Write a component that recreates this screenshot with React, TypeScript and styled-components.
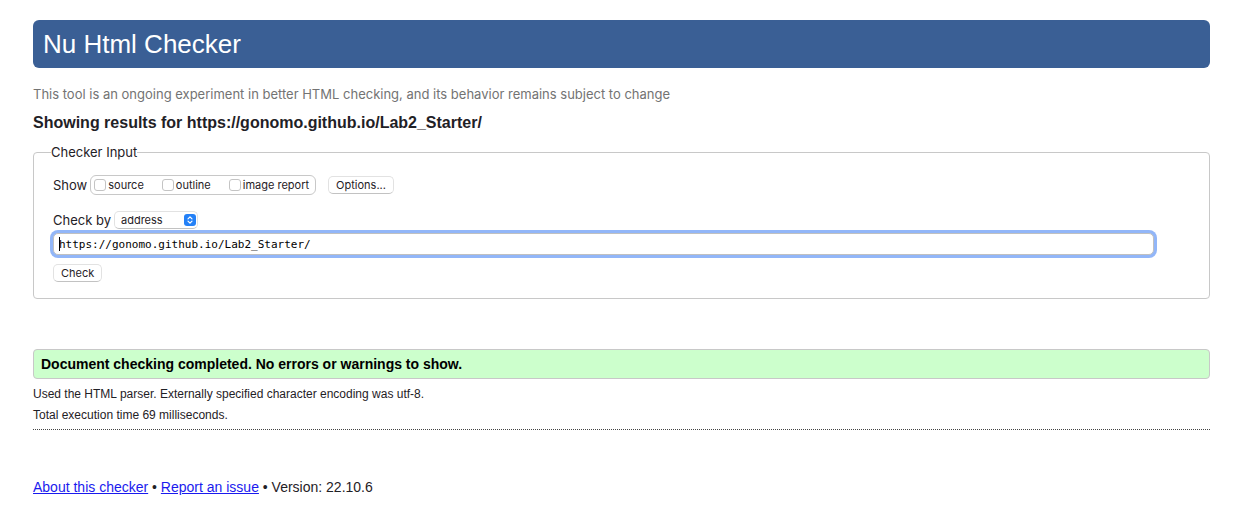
import React, { useState } from "react";
import styled, { createGlobalStyle } from "styled-components";

const sans = '"Liberation Sans", Arial, sans-serif';
const system = 'Inter, system-ui, sans-serif';

const GlobalStyle = createGlobalStyle`
  *, *::before, *::after { box-sizing: border-box; }
  body { margin: 0; background: #fff; color: #1f2126; font-family: ${sans}; }
`;

const Page = styled.div`
  padding: 20px 36px 0 33px;
`;

const Banner = styled.h1`
  margin: 0;
  padding: 0 10px;
  border-radius: 6px;
  background: #3a5f95;
  color: #fff;
  font-size: 26px;
  font-weight: 400;
  line-height: 48px;
`;

const Notice = styled.p`
  margin: 16px 0 0;
  color: #737373;
  font-family: ${system};
  font-size: 13px;
  line-height: 20px;
`;

const ResultsHeading = styled.h2`
  margin: 9px 0 0;
  font-size: 16px;
  line-height: 20px;
`;

const CheckerForm = styled.form`
  margin-top: 9px;
`;

const Fieldset = styled.fieldset`
  margin: 0;
  padding: 13px 55px 15px 19px;
  border: 1px solid #c8c8c8;
  border-radius: 4px;
  min-width: 0;
  font-family: ${system};
  font-size: 13px;
`;

const Legend = styled.legend`
  margin-left: -2px;
  padding: 0;
  line-height: 20px;
`;

const Row = styled.div<{ $top?: number }>`
  display: flex;
  align-items: center;
  height: 20px;
  margin-top: ${(p) => p.$top ?? 0}px;
`;

const ShowGroup = styled.div`
  display: flex;
  align-items: center;
  gap: 18px;
  height: 20px;
  margin: 0 12px 0 3px;
  padding: 0 6px 0 3px;
  border: 1px solid #c8c8c8;
  border-radius: 6px;
`;

const CheckLabel = styled.label`
  display: flex;
  align-items: center;
  gap: 2px;
  font-size: 11px;
  line-height: 18px;
`;

const Checkbox = styled.input`
  appearance: none;
  width: 12px;
  height: 12px;
  margin: 0;
  border: 1px solid #c4c4c4;
  border-radius: 3px;
  background: #fff;
  &:checked { background: #2481f7; }
`;

const Button = styled.button`
  height: 18px;
  padding: 0 7px;
  border: 1px solid #e2e2e2;
  border-bottom-color: #c2c2c2;
  border-radius: 5px;
  background: #fff;
  color: #1f2126;
  font-family: ${system};
  font-size: 11px;
  line-height: 16px;
`;

const SelectWrap = styled.span`
  position: relative;
  display: flex;
  margin-left: 3px;
`;

const Select = styled.select`
  appearance: none;
  width: 84px;
  height: 18px;
  padding: 0 20px 0 6px;
  border: 1px solid #e2e2e2;
  border-bottom-color: #c2c2c2;
  border-radius: 5px;
  background: #fff;
  color: #1f2126;
  font-family: ${system};
  font-size: 11px;
  line-height: 16px;
`;

const Stepper = styled.svg`
  position: absolute;
  top: 3px;
  right: 2px;
  pointer-events: none;
`;

const AddressWrap = styled.div`
  position: relative;
  margin-top: 3px;
`;

const Address = styled.input`
  display: block;
  width: 100%;
  height: 22px;
  padding: 0 5px;
  border: 1px solid #c0c0c0;
  border-radius: 5px;
  outline: none;
  box-shadow: 0 0 0 3px #92b6f8;
  caret-color: transparent;
  color: #000;
  font-family: "DejaVu Sans Mono", Menlo, monospace;
  font-size: 11px;
`;

const Caret = styled.span`
  position: absolute;
  top: 4px;
  left: 6px;
  width: 1px;
  height: 14px;
  background: #000;
`;

const Success = styled.p`
  margin: 50px 0 0;
  padding: 0 7px;
  border: 1px solid #c8c8c8;
  border-radius: 4px;
  background: #ccffcc;
  color: #000;
  font-size: 14px;
  font-weight: 700;
  line-height: 28px;
`;

const Details = styled.div`
  padding: 5px 0 3px;
  border-bottom: 1px dotted #444;
`;

const Detail = styled.p`
  margin: 0;
  font-size: 12px;
  line-height: 21px;
`;

const Footer = styled.footer`
  margin-top: 47px;
  font-size: 14px;
  line-height: 20px;
`;

const Link = styled.a`
  color: #1a1aee;
`;

const views = ["source", "outline", "image report"];

export default function App() {
  const [url, setUrl] = useState("https://gonomo.github.io/Lab2_Starter/");
  return (
    <Page>
      <GlobalStyle />
      <Banner>Nu Html Checker</Banner>
      <Notice>
        This tool is an ongoing experiment in better HTML checking, and its behavior remains subject to change
      </Notice>
      <ResultsHeading>Showing results for https://gonomo.github.io/Lab2_Starter/</ResultsHeading>
      <CheckerForm onSubmit={(e) => e.preventDefault()}>
        <Fieldset>
          <Legend>Checker Input</Legend>
          <Row>
            <span>Show</span>
            <ShowGroup role="group" aria-label="Show">
              {views.map((view) => (
                <CheckLabel key={view}>
                  <Checkbox type="checkbox" name={view} />
                  {view}
                </CheckLabel>
              ))}
            </ShowGroup>
            <Button type="button">Options...</Button>
          </Row>
          <Row $top={15}>
            <label htmlFor="docselect">Check by</label>
            <SelectWrap>
              <Select id="docselect" defaultValue="address">
                <option value="address">address</option>
                <option value="file">file upload</option>
                <option value="text">text input</option>
              </Select>
              <Stepper width="12" height="12" viewBox="0 0 12 12" aria-hidden="true">
                <rect width="12" height="12" rx="3" fill="#2481f7" />
                <path d="M4 4.8 6 2.8 8 4.8M4 7.2 6 9.2 8 7.2" fill="none" stroke="#fff" strokeWidth="1.2" strokeLinecap="round" strokeLinejoin="round" />
              </Stepper>
            </SelectWrap>
          </Row>
          <AddressWrap>
            <Address
              type="text"
              aria-label="Address"
              spellCheck={false}
              value={url}
              onChange={(e) => setUrl(e.target.value)}
            />
            <Caret />
          </AddressWrap>
          <Row $top={8}>
            <Button type="submit">Check</Button>
          </Row>
        </Fieldset>
      </CheckerForm>
      <Success>Document checking completed. No errors or warnings to show.</Success>
      <Details>
        <Detail>Used the HTML parser. Externally specified character encoding was utf-8.</Detail>
        <Detail>Total execution time 69 milliseconds.</Detail>
      </Details>
      <Footer>
        <Link href="#about">About this checker</Link> • <Link href="#issues">Report an issue</Link> • Version: 22.10.6
      </Footer>
    </Page>
  );
}
